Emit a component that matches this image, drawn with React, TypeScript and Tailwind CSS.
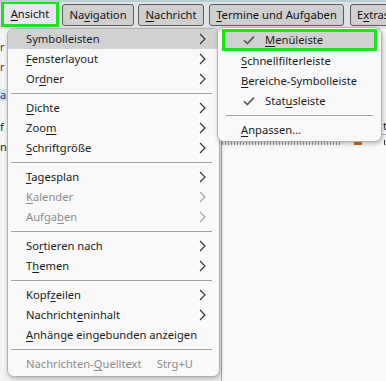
import React from "react";

function Chevron({ disabled }: { disabled?: boolean }) {
  return (
    <svg width="7" height="12" viewBox="0 0 7 12" className={disabled ? "text-[#a0a0a0]" : "text-[#303030]"}>
      <path d="M1 1l5 5-5 5" fill="none" stroke="currentColor" strokeWidth="1.1" />
    </svg>
  );
}

function Check() {
  return (
    <svg width="12" height="10" viewBox="0 0 12 10" className="text-[#5a5a5a]">
      <path d="M1 5.2l3.3 3.3L11 1.6" fill="none" stroke="currentColor" strokeWidth="1.6" />
    </svg>
  );
}

type Item = {
  pre?: string;
  key?: string;
  post?: string;
  sub?: boolean;
  disabled?: boolean;
  active?: boolean;
  shortcut?: string;
};

function Label({ pre, k, post }: { pre?: string; k?: string; post?: string }) {
  return (
    <span className="whitespace-nowrap">
      {pre}
      {k && <span className="underline underline-offset-2 decoration-1">{k}</span>}
      {post}
    </span>
  );
}

function MenuRow({ it }: { it: Item }) {
  return (
    <div
      className={
        "flex h-5 items-center pl-[18px] pr-[13px] " +
        (it.active ? "bg-[#d1d1d1] rounded-t-[6px] " : "") +
        (it.disabled ? "text-[#8c8c8c]" : "text-[#1b1b1b]")
      }
    >
      <Label pre={it.pre} k={it.key} post={it.post} />
      <div className="flex-1" />
      {it.shortcut && <span className="mr-[13px]">{it.shortcut}</span>}
      {it.sub && <Chevron disabled={it.disabled} />}
    </div>
  );
}

function Sep({ cls }: { cls: string }) {
  return (
    <div className="flex h-[9px] items-center">
      <div className={"h-px flex-1 bg-[#a3a3a3] " + cls} />
    </div>
  );
}

const groups: Item[][] = [
  [
    { pre: "Symbolleisten", sub: true, active: true },
    { key: "F", post: "ensterlayout", sub: true },
    { pre: "Or", key: "d", post: "ner", sub: true },
  ],
  [
    { key: "D", post: "ichte", sub: true },
    { pre: "Zoo", key: "m", sub: true },
    { key: "S", post: "chriftgröße", sub: true },
  ],
  [
    { key: "T", post: "agesplan", sub: true },
    { key: "K", post: "alender", sub: true, disabled: true },
    { pre: "Aufga", key: "b", post: "en", sub: true, disabled: true },
  ],
  [
    { pre: "So", key: "r", post: "tieren nach", sub: true },
    { pre: "T", key: "h", post: "emen", sub: true },
  ],
  [
    { pre: "Kopf", key: "z", post: "eilen", sub: true },
    { pre: "Nachricht", key: "e", post: "ninhalt", sub: true },
    { key: "A", post: "nhänge eingebunden anzeigen" },
  ],
  [{ pre: "Nachrichten-", key: "Q", post: "uelltext", disabled: true, shortcut: "Strg+U" }],
];

function BarButton({ w, children }: { w: string; children: React.ReactNode }) {
  return (
    <div
      className={
        "flex h-[22px] shrink-0 items-center justify-center rounded-[3px] border border-[#5c5c5c] bg-[#cfcfcf] text-[#111] " + w
      }
    >
      {children}
    </div>
  );
}

export default function App() {
  return (
    <div className="relative h-[381px] w-[386px] overflow-hidden bg-[#fafafa] font-['Noto_Sans',sans-serif] text-[11.2px] leading-5">
      {/* top bar */}
      <div className="flex h-[29px] items-start overflow-hidden border-t-2 border-[#b9cdd6] bg-[#dfe3e6] pl-px">
        <div className="-mt-px flex h-[26px] w-[58px] shrink-0 items-center justify-center border-[3px] border-[#19e619] bg-[#e6e6ee] text-[#111]">
          <Label k="A" post="nsicht" />
        </div>
        <div className="ml-[3px] mt-[2px] flex shrink-0 gap-[4px]">
          <BarButton w="w-[72px]">
            <Label pre="Na" k="v" post="igation" />
          </BarButton>
          <BarButton w="w-[66px]">
            <Label k="N" post="achricht" />
          </BarButton>
          <BarButton w="w-[135px] ml-px">
            <Label k="T" post="ermine und Aufgaben" />
          </BarButton>
          <BarButton w="w-[60px] ml-[2px] justify-start pl-[6px]">
            <Label pre="E" k="x" post="tras" />
          </BarButton>
        </div>
      </div>

      {/* background app */}
      <div className="flex h-[352px]">
        <div className="w-[221px] shrink-0 bg-[#f3f3f3] text-[11px]">
          <div className="h-[8px]" />
          <div className="h-5 text-[#7a1d1d]">r</div>
          <div className="h-5 text-[#7a1d1d]">r</div>
          <div className="h-[12px]" />
          <div className="h-[12px] bg-[#cfe3f5] leading-3 text-[#1b3e7a]">a</div>
          <div className="h-[16px]" />
          <div className="h-5 text-[#222]">f</div>
          <div className="h-5 text-[#222]">n</div>
        </div>
        <div className="flex-1 border-l border-[#a9a9a9] bg-[#fafafa]">
          <div className="h-[89px]" />
          <div className="flex h-[17px] items-center justify-end border-b border-[#b8b8b8] text-[#222]">t</div>
          <div className="flex h-[14px] items-center justify-end text-[#333]">
            <span className="mr-[12px] h-[5px] w-[120px] bg-[repeating-linear-gradient(90deg,#6b6b6b_0px,#6b6b6b_1px,transparent_1px,transparent_3px)] opacity-70" />
            <span className="mr-[22px] h-[6px] w-[8px] bg-[#d2691e]" />
            <span className="h-[5px] w-px bg-[#333] mr-[2px]" />
          </div>
        </div>
      </div>

      {/* main menu */}
      <div className="absolute left-[7px] top-[28px] w-[213px] rounded-[7px] border border-[#b2b2b2] bg-[#f9f9f9] pb-[2px] shadow-[1px_2px_4px_rgba(0,0,0,0.25)]">
        {groups.map((g, gi) => (
          <React.Fragment key={gi}>
            {gi > 0 && <Sep cls="ml-[3px] mr-[7px]" />}
            {g.map((it, i) => (
              <MenuRow key={i} it={it} />
            ))}
          </React.Fragment>
        ))}
      </div>

      {/* submenu */}
      <div className="absolute left-[217px] top-[27px] w-[165px] rounded-[7px] border border-[#b2b2b2] bg-[#f9f9f9] pt-px pb-px text-[#1b1b1b] shadow-[1px_2px_4px_rgba(0,0,0,0.25)]">
        <div className="mx-[4px] flex h-[22px] items-center border-[3px] border-[#19e619] bg-[#d1d1d1]">
          <div className="ml-[18px] w-[22px] shrink-0">
            <Check />
          </div>
          <Label k="M" post="enüleiste" />
        </div>
        <div className="flex h-5 items-center pl-[23px]">
          <Label k="S" post="chnellfilterleiste" />
        </div>
        <div className="flex h-5 items-center pl-[23px]">
          <Label k="B" post="ereiche-Symbolleiste" />
        </div>
        <div className="flex h-5 items-center">
          <div className="ml-[25px] w-[22px] shrink-0">
            <Check />
          </div>
          <Label pre="Stat" k="u" post="sleiste" />
        </div>
        <Sep cls="mx-[8px]" />
        <div className="flex h-5 items-center pl-[23px]">
          <Label k="A" post="npassen…" />
        </div>
      </div>
    </div>
  );
}
